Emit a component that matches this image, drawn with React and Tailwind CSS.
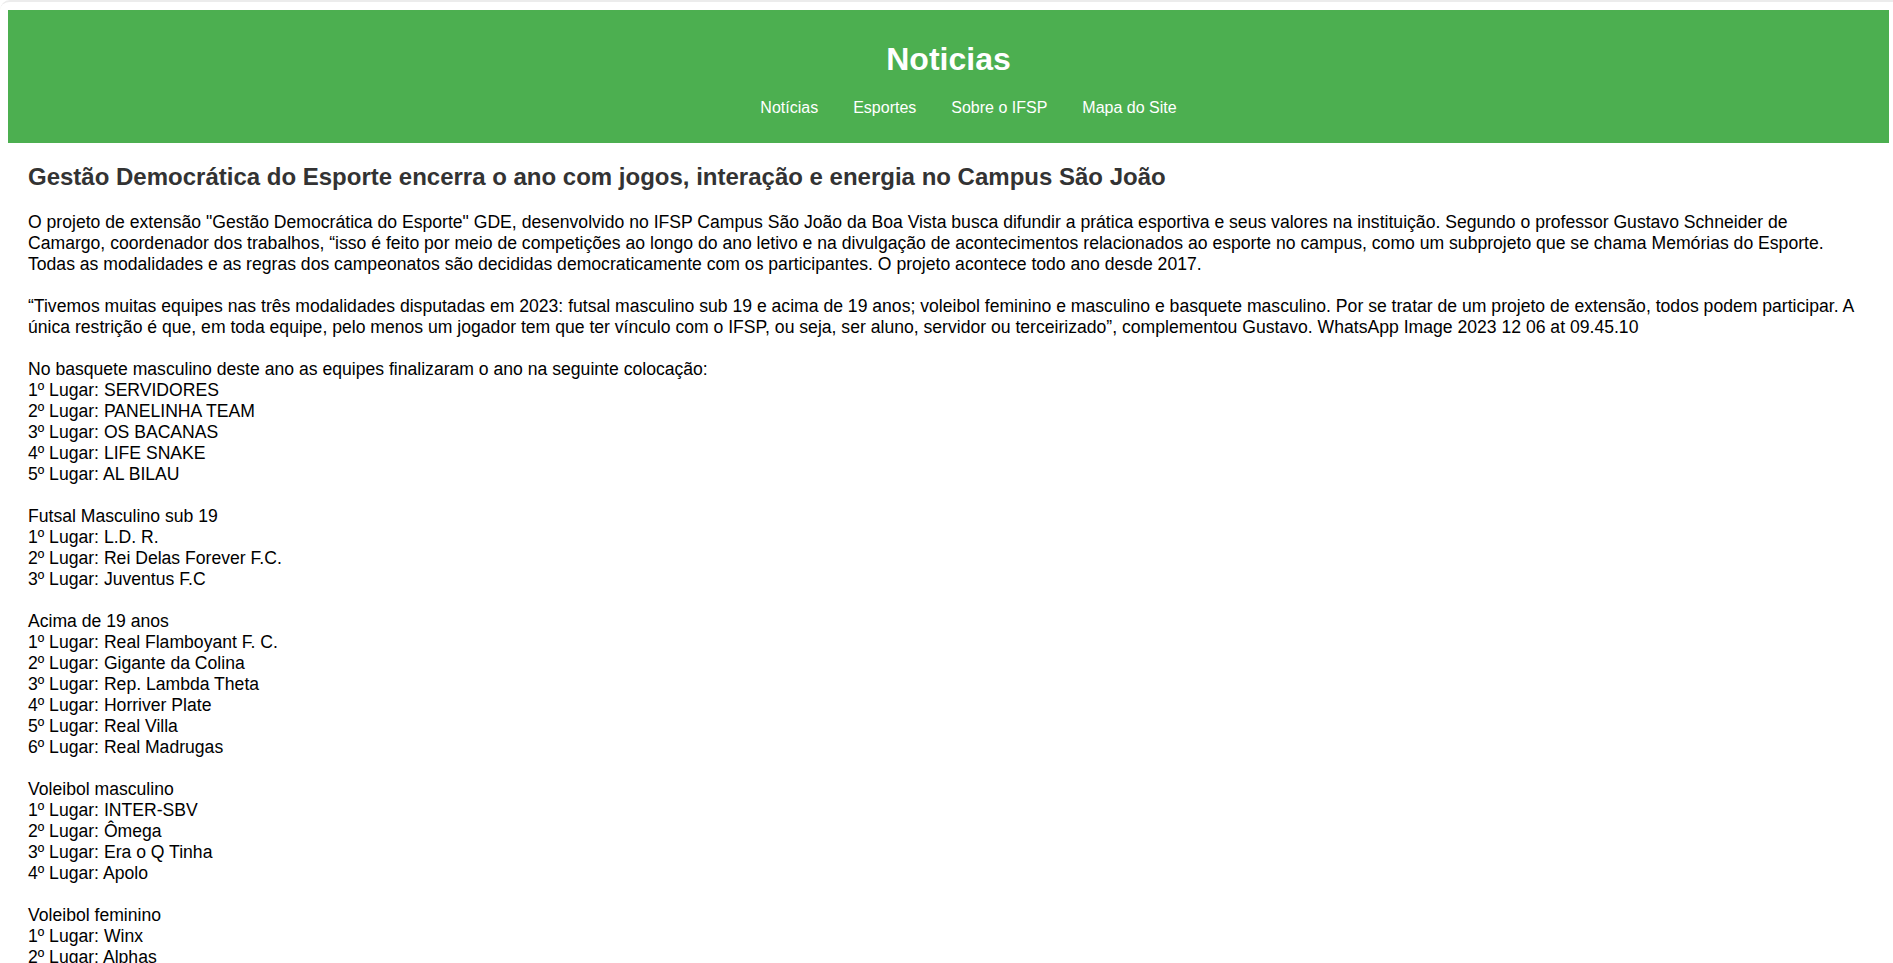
const sections = [
  {
    title: 'No basquete masculino deste ano as equipes finalizaram o ano na seguinte colocação:',
    items: ['SERVIDORES', 'PANELINHA TEAM', 'OS BACANAS', 'LIFE SNAKE', 'AL BILAU'],
  },
  {
    title: 'Futsal Masculino sub 19',
    items: ['L.D. R.', 'Rei Delas Forever F.C.', 'Juventus F.C'],
  },
  {
    title: 'Acima de 19 anos',
    items: ['Real Flamboyant F. C.', 'Gigante da Colina', 'Rep. Lambda Theta', 'Horriver Plate', 'Real Villa', 'Real Madrugas'],
  },
  {
    title: 'Voleibol masculino',
    items: ['INTER-SBV', 'Ômega', 'Era o Q Tinha', 'Apolo'],
  },
  {
    title: 'Voleibol feminino',
    items: ['Winx', 'Alphas'],
  },
];

const links = ['Notícias', 'Esportes', 'Sobre o IFSP', 'Mapa do Site'];

export default function App() {
  return (
    <div className="h-[963px] overflow-hidden bg-white rounded-tl-[10px] rounded-bl-[10px] border-t-2 border-[#ececec] font-['Liberation_Sans',Arial,sans-serif] text-[#000]">
      <header className="ml-[8px] mr-[4px] mt-[8px] bg-[#4caf50] text-white text-center pt-[31px] pb-[26px]">
        <h1 className="text-[32px] font-bold leading-[37px]">Noticias</h1>
        <nav className="mt-[21px]">
          <ul className="flex justify-center gap-[35px] pl-[40px] text-[16px] leading-[18px]">
            {links.map((l) => (
              <li key={l}>
                <a href="#" className="text-white">{l}</a>
              </li>
            ))}
          </ul>
        </nav>
      </header>

      <main className="ml-[8px] mr-[4px] px-[20px] pt-[20px]">
        <h2 className="text-[24px] font-bold leading-[28px] text-[#333] mb-[21px]">
          Gestão Democrática do Esporte encerra o ano com jogos, interação e energia no Campus São João
        </h2>
        <div className="text-[17.6px] leading-[21px]">
          <p>
            O projeto de extensão "Gestão Democrática do Esporte" GDE, desenvolvido no IFSP Campus São João da Boa Vista busca difundir a prática esportiva e seus valores na instituição. Segundo o professor Gustavo Schneider de Camargo, coordenador dos trabalhos, “isso é feito por meio de competições ao longo do ano letivo e na divulgação de acontecimentos relacionados ao esporte no campus, como um subprojeto que se chama Memórias do Esporte. Todas as modalidades e as regras dos campeonatos são decididas democraticamente com os participantes. O projeto acontece todo ano desde 2017.
          </p>
          <p className="mt-[21px]">
            “Tivemos muitas equipes nas três modalidades disputadas em 2023: futsal masculino sub 19 e acima de 19 anos; voleibol feminino e masculino e basquete masculino. Por se tratar de um projeto de extensão, todos podem participar. A única restrição é que, em toda equipe, pelo menos um jogador tem que ter vínculo com o IFSP, ou seja, ser aluno, servidor ou terceirizado”, complementou Gustavo. WhatsApp Image 2023 12 06 at 09.45.10
          </p>
          {sections.map((s) => (
            <div key={s.title} className="mt-[21px]">
              <div>{s.title}</div>
              {s.items.map((it, i) => (
                <div key={it}>{i + 1}º Lugar: {it}</div>
              ))}
            </div>
          ))}
        </div>
      </main>
    </div>
  );
}
